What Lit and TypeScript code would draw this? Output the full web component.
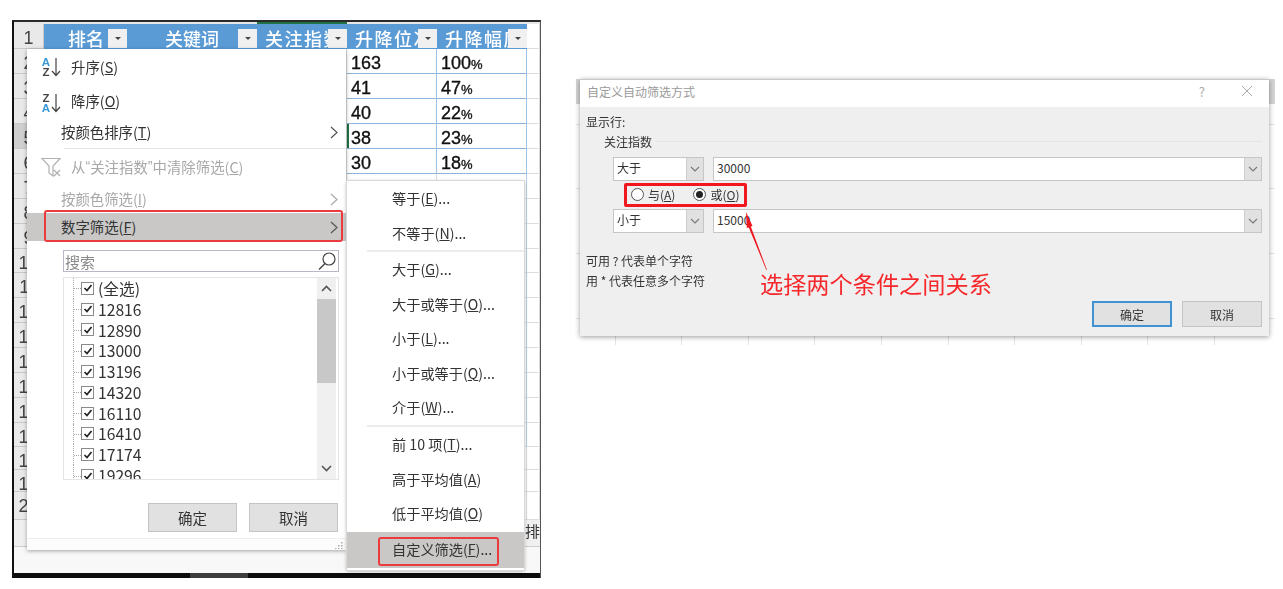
import { LitElement, html, css, svg } from "lit";
import { customElement } from "lit/decorators.js";

const rowNums = Array.from({ length: 20 }, (_, i) => i + 1);
const colIdx = [1, 2, 3, 4, 5, 6];
const heads = ["排名", "关键词", "关注指数", "升降位次", "升降幅度"];
const data: Record<number, [string, string]> = {
  2: ["163", "100"],
  3: ["41", "47"],
  4: ["40", "22"],
  5: ["38", "23"],
  6: ["30", "18"],
};
const values = ["12816", "12890", "13000", "13196", "14320", "16110", "16410", "17174", "19296"];

const chev = svg`<polyline points="1,1 7,6.5 1,12" fill="none" stroke="currentColor" stroke-width="1.2"/>`;
const check = svg`<polyline points="2.5,6 5,8.5 9.5,3" fill="none" stroke="#222" stroke-width="1.7"/>`;
const ddIcon = svg`<polyline points="1,1 5,5 9,1" fill="none" stroke="#777" stroke-width="1.1"/>`;

function label(text: string, key: string, tail = "") {
  return html`${text}(<u>${key}</u>)${tail}`;
}

@customElement("app-root")
export class AppRoot extends LitElement {
  static styles = css`
    :host { display: block; position: relative; width: 1283px; height: 589px; overflow: hidden; background: #fff;
      font-family: "Noto Sans CJK SC", "Noto Sans", sans-serif; color: #333; }
    u { text-underline-offset: 1px; text-decoration-thickness: 1px; }
    svg { display: block; }

    .sheet { position: absolute; left: 12px; top: 20px; width: 529px; height: 558px; box-sizing: border-box; overflow: hidden;
      border-top: 2px solid #2a2a2a; border-left: 2px solid #111; border-right: 1px solid #555; display: flex; flex-direction: column; background: #fff; filter: blur(0.35px); }
    .colhead { height: 2px; flex: none; display: grid; grid-template-columns: 30px 83px 130px 90px 90px 90px 1fr; background: #e6e6e6; }
    .colhead .sel { background: #217346; }
    .grid { display: grid; flex: none; grid-template-columns: 30px 83px 130px 90px 90px 90px 1fr;
      grid-template-rows: repeat(9, 25px) 24px repeat(6, 25px) 24px 23px 22px 28px; }
    .c { box-sizing: border-box; border-right: 1px solid #dcdcdc; border-bottom: 1px solid #dcdcdc; overflow: hidden; white-space: nowrap; }
    .rn { background: #e9e9e9; border-color: #c9c9c9; font: 18px/29px "Liberation Sans", sans-serif; color: #444; text-align: center; }
    .rn.on { background: #cfcfcf; }
    .h { background: #5b9bd5; border: none; color: #fff; font-size: 18px; font-weight: 500; line-height: 25px; display: flex; align-items: center; position: relative; padding-top: 3px; }
    .h.a { padding-left: 24px; }
    .h.b { padding-left: 38px; }
    .h.d { padding-left: 8px; letter-spacing: 1.5px; }
    .fb { position: absolute; right: 0; top: 5px; width: 19px; height: 19px; background: #f0f0f0; display: flex; align-items: center; justify-content: center; }
    .fb i { width: 0; height: 0; border: 3.5px solid transparent; border-top: 3.5px solid #444; border-bottom: 0; }
    .d1 { border-right: 1px solid #9dc3e6; border-bottom: 1px solid #8fb4dc; color: #111; font: 18px/28px "Liberation Sans", sans-serif; padding-left: 4px; -webkit-text-stroke: 0.35px #111; }
    .d1 small { font-size: 13px; }
    .lb { border-right-color: #b4cfe9; }
    .sg { box-shadow: inset 2px 0 0 #217346; }
    .tabs { height: 26px; flex: none; background: #f0f0f0; border-bottom: 1px solid #cfcfcf; display: flex; justify-content: flex-end; font-size: 15px; line-height: 21px; }
    .tabs span { width: 15px; white-space: nowrap; }
    .sp { flex: 1; background: #f8f8f8; }
    .bottom { height: 5px; flex: none; background: #0c0c0c; display: flex; padding-left: 176px; }
    .bottom i { width: 58px; background: #3d3d3d; }

    .menu { position: absolute; background: #fff; box-shadow: 0 1px 4px rgba(0,0,0,.35); font-size: 14.4px; color: #333; display: grid; filter: blur(0.35px); }
    .m1 { left: 27px; top: 49px; width: 319px; height: 501px;
      grid-template-rows: 36px 32px 31px 1px 36px 28px 28px 9px 22px 5px 203px 23px 29px 6px 12px; }
    .m2 { left: 347px; top: 181px; width: 177px; height: 389px; outline: 1px solid #d8d8d8; font-size: 14.2px;
      grid-template-rows: 36px 33px 2px 36px 34px 34px 35px 34px 2px 36px 33px 36px 36px 2px; }
    .it { display: flex; align-items: center; white-space: nowrap; padding-left: 34px; padding-bottom: 2px; box-sizing: border-box; position: relative; }
    .it.t { padding-left: 44px; }
    .m2 .it.t { padding-left: 45px; }
    .it.off { color: #a8a8a8; }
    .it.hv { background: #c9c8c7; }
    .it .ar { position: absolute; right: 8px; top: 50%; margin-top: -6.5px; color: #555; }
    .it.off .ar { color: #aaa; }
    .ic { position: absolute; left: 14px; top: 50%; margin-top: -10px; }
    .q { font-family: "Liberation Sans", sans-serif; }
    .sort { position: absolute; left: 14px; top: 7px; width: 22px; height: 22px; display: flex; align-items: center; }
    .sort .ls { display: flex; flex-direction: column; font: bold 11.5px/10px "Liberation Sans", sans-serif; width: 10px; text-align: center; }
    .bl { color: #3a97d6; } .dk { color: #444; }
    .sepL { margin-left: 37px; background: #e4e4e4; }
    .sepR { margin-left: 20px; background: #ececec; }
    .search { margin: 0 7px 0 36px; border: 1px solid #b8b8c8; box-sizing: border-box; display: flex; align-items: center; justify-content: space-between; color: #8a8a8a; font-size: 15px; padding: 0 1px; }
    .list { margin: 0 7px 0 36px; border: 1px solid #e4e4e4; box-sizing: border-box; display: flex; overflow: hidden; }
    .tree { flex: 1; padding: 0 0 0 9px; overflow: hidden; }
    .tree > div { height: 20.8px; display: flex; align-items: center; font-size: 15.7px; color: #333; position: relative; padding-left: 7px; border-left: 1px dotted #aaa; }
    .cb { width: 11px; height: 11px; border: 1px solid #8a8a8a; background: #fff; margin-right: 4px; flex: none; position: relative; }
    .cb svg { position: absolute; left: -0.5px; top: -0.5px; }
    .tick { position: absolute; left: 0; top: 50%; width: 7px; border-top: 1px dotted #aaa; }
    .scroll { width: 19px; margin-right: 2px; background: #f0f0f0; display: grid; grid-template-rows: 21px 84px 1fr 21px; justify-items: center; align-items: center; }
    .thumb { background: #c8c8c8; width: 100%; height: 100%; }
    .btns { display: flex; justify-content: flex-end; gap: 12px; margin-right: 8px; }
    .btn { background: #e1e1e1; border: 1px solid #c4c4c4; box-sizing: border-box; display: flex; align-items: center; justify-content: center; font-size: 14.5px; color: #333; }
    .btns .btn { width: 89px; }
    .foot { background: #fcfcfc; border-top: 1px solid #eeeeee; display: flex; justify-content: flex-end; align-items: center; padding-right: 3px; }
    .red { position: absolute; box-sizing: border-box; border: 2px solid #ec3b3f; border-radius: 3px; pointer-events: none; }
    .r1 { left: 44px; top: 210px; width: 299px; height: 32px; }
    .r2 { left: 378px; top: 537px; width: 121px; height: 29px; }

    .back { position: absolute; left: 576px; top: 79px; width: 699px; height: 266px; filter: blur(0.35px);
      background:
        linear-gradient(#d4d4d4, #d4d4d4) 0 0 / 100% 25px no-repeat,
        repeating-linear-gradient(to bottom, transparent 0 44.8px, #e6e6e6 44.8px 45.8px, transparent 45.8px 64.6px) ,
        repeating-linear-gradient(to right, transparent 0 38.6px, #e4e4e4 38.6px 39.6px, transparent 39.6px 66.6px); }
    .dlg { position: absolute; left: 580px; top: 79px; width: 689px; height: 257px; background: #efefef; border-top: 1px solid #c8c8c8; box-sizing: border-box; box-shadow: 0 1px 5px rgba(0,0,0,.4); font-size: 12px; color: #333; display: flex; flex-direction: column; filter: blur(0.35px); }
    .ttl { height: 27px; flex: none; background: #fff; display: flex; align-items: center; padding: 0 16px 5px 7px; box-sizing: border-box; color: #9a9a9a; font-size: 12px; }
    .ttl .g { flex: 1; }
    .ttl .qm { margin-right: 36px; font-size: 13px; color: #aaa; }
    .bd { flex: 1; padding: 7px 7px 0 6px; display: flex; flex-direction: column; }
    .t16 { height: 16px; line-height: 16px; }
    .lg { height: 27px; padding-bottom: 5px; box-sizing: border-box; margin-left: 18px; display: flex; align-items: center; gap: 4px; flex: none; }
    .lg i { flex: 1; border-top: 1px solid #e4e4e4; }
    .crow { display: flex; gap: 9px; margin-left: 27px; height: 24px; flex: none; }
    .combo { background: #fff; border: 1px solid #c6c6c6; box-sizing: border-box; display: flex; align-items: center; justify-content: space-between; padding-left: 3px; }
    .combo > span:first-child { margin-bottom: 3px; }
    .combo.s { width: 91px; }
    .combo.l { flex: 1; }
    .dd { width: 17px; height: 100%; background: #e1e1e1; border-left: 1px solid #cfcfcf; display: flex; align-items: center; justify-content: center; box-sizing: border-box; }
    .rrow { height: 28px; flex: none; margin-left: 45px; display: flex; align-items: center; gap: 18px; padding-bottom: 1px; box-sizing: border-box; }
    .rd { display: flex; align-items: center; gap: 4px; }
    .radio { width: 13px; height: 13px; border-radius: 50%; border: 1px solid #555; background: #fff; box-sizing: border-box; display: flex; align-items: center; justify-content: center; }
    .radio i { width: 7px; height: 7px; border-radius: 50%; background: #222; }
    .help { margin-top: 20px; display: flex; flex-direction: column; gap: 4px; }
    .dbtns { margin-top: auto; margin-bottom: 9px; display: flex; justify-content: flex-end; gap: 10px; }
    .dbtns .btn { width: 80px; height: 26px; font-size: 12px; }
    .dbtns .pri { border: 2px solid #3f93d3; }
    .rbox { position: absolute; left: 624px; top: 183px; width: 123px; height: 24px; box-sizing: border-box; border: 3px solid #f0171f; border-radius: 2px; }
    .note { position: absolute; left: 760px; top: 266px; color: #f6282c; font-size: 23.2px; line-height: 34px; white-space: nowrap; filter: blur(0.3px); }
    .arrow { position: absolute; left: 740px; top: 205px; }
  `;

  private cell(r: number, c: number) {
    if (c === 0) return html`<div class="c rn ${r === 5 ? "on" : ""}">${r}</div>`;
    if (r === 1 && c <= 5) {
      const cls = c === 1 ? "a" : c === 2 ? "b" : "d";
      return html`<div class="c h ${cls}">${heads[c - 1]}<span class="fb"><i></i></span></div>`;
    }
    if (data[r] && (c === 4 || c === 5)) {
      const [a, b] = data[r];
      const sg = r === 5 && c === 4 ? "sg" : "";
      return c === 4
        ? html`<div class="c d1 ${sg}">${a}</div>`
        : html`<div class="c d1">${b}<small>%</small></div>`;
    }
    if (c === 5 && r <= 17) return html`<div class="c lb"></div>`;
    return html`<div class="c"></div>`;
  }

  private sheet() {
    return html`<div class="sheet">
      <div class="colhead"><i></i><i></i><i></i><i class="sel"></i><i></i><i></i><i></i></div>
      <div class="grid">
        ${rowNums.map((r) => html`${this.cell(r, 0)}${colIdx.map((c) => this.cell(r, c))}`)}
      </div>
      <div class="tabs"><span>排</span></div>
      <div class="sp"></div>
      <div class="bottom"><i></i></div>
    </div>`;
  }

  private filterMenu() {
    return html`<div class="menu m1">
      <div class="it t"><span class="sort"><span class="ls"><span class="bl">A</span><span class="dk">Z</span></span>
        <svg width="10" height="20" viewBox="0 0 10 20"><path d="M5 1V18M1 14l4 4.5 4-4.5" fill="none" stroke="#444" stroke-width="1.2"/></svg></span>${label("升序", "S")}</div>
      <div class="it t"><span class="sort"><span class="ls"><span class="dk">Z</span><span class="bl">A</span></span>
        <svg width="10" height="20" viewBox="0 0 10 20"><path d="M5 1V18M1 14l4 4.5 4-4.5" fill="none" stroke="#444" stroke-width="1.2"/></svg></span>${label("降序", "O")}</div>
      <div class="it">${label("按颜色排序", "T")}<svg class="ar" width="8" height="13">${chev}</svg></div>
      <div class="sepL"></div>
      <div class="it t off"><svg class="ic" width="22" height="21" viewBox="0 0 22 21"><path d="M1 1.5H19L12 9V19L8 16V9Z M13 13l6 6M19 13l-6 6" fill="none" stroke="#b0b0b0" stroke-width="1.2"/></svg>从<span class="q">“</span>关注指数<span class="q">”</span>中清除筛选(<u>C</u>)</div>
      <div class="it off">${label("按颜色筛选", "I")}<svg class="ar" width="8" height="13">${chev}</svg></div>
      <div class="it hv">${label("数字筛选", "F")}<svg class="ar" width="8" height="13">${chev}</svg></div>
      <div></div>
      <div class="search"><span>搜索</span><svg width="20" height="20" viewBox="0 0 20 20"><circle cx="12" cy="8" r="6" fill="none" stroke="#444" stroke-width="1.2"/><path d="M8 12.5L2 18.5" stroke="#444" stroke-width="1.4"/></svg></div>
      <div></div>
      <div class="list">
        <div class="tree">
          ${["(全选)", ...values].map((v) => html`<div><i class="tick"></i><span class="cb"><svg width="12" height="12">${check}</svg></span>${v}</div>`)}
        </div>
        <div class="scroll">
          <svg width="11" height="7"><polyline points="1,6 5.5,1.5 10,6" fill="none" stroke="#555" stroke-width="1.6"/></svg>
          <div class="thumb"></div><div></div>
          <svg width="11" height="7"><polyline points="1,1 5.5,5.5 10,1" fill="none" stroke="#555" stroke-width="1.6"/></svg>
        </div>
      </div>
      <div></div>
      <div class="btns"><div class="btn">确定</div><div class="btn">取消</div></div>
      <div></div>
      <div class="foot"><svg width="8" height="8"><path d="M6 1h1.5v1.5H6zM3 4h1.5v1.5H3zM6 4h1.5v1.5H6zM0 7h1.5v1H0zM3 7h1.5v1H3zM6 7h1.5v1H6z" fill="#aaa"/></svg></div>
    </div>`;
  }

  private subMenu() {
    return html`<div class="menu m2">
      <div class="it t">${label("等于", "E", "...")}</div>
      <div class="it t">${label("不等于", "N", "...")}</div>
      <div class="sepR"></div>
      <div class="it t">${label("大于", "G", "...")}</div>
      <div class="it t">${label("大于或等于", "O", "...")}</div>
      <div class="it t">${label("小于", "L", "...")}</div>
      <div class="it t">${label("小于或等于", "Q", "...")}</div>
      <div class="it t">${label("介于", "W", "...")}</div>
      <div class="sepR"></div>
      <div class="it t">${label("前 10 项", "T", "...")}</div>
      <div class="it t">${label("高于平均值", "A")}</div>
      <div class="it t">${label("低于平均值", "O")}</div>
      <div class="it t hv">${label("自定义筛选", "F", "...")}</div>
    </div>`;
  }

  private combo(kind: string, val: string) {
    return html`<div class="combo ${kind}"><span>${val}</span><span class="dd"><svg width="10" height="6">${ddIcon}</svg></span></div>`;
  }

  private dialog() {
    return html`<div class="back"></div>
    <div class="dlg">
      <div class="ttl"><span>自定义自动筛选方式</span><span class="g"></span><span class="qm">?</span>
        <svg width="12" height="12" viewBox="0 0 12 12"><path d="M1 1L11 11M11 1L1 11" stroke="#a8a8a8" stroke-width="1"/></svg></div>
      <div class="bd">
        <div class="t16">显示行:</div>
        <div class="lg"><span>关注指数</span><i></i></div>
        <div class="crow">${this.combo("s", "大于")}${this.combo("l", "30000")}</div>
        <div class="rrow">
          <span class="rd"><span class="radio"></span><span>与(<u>A</u>)</span></span>
          <span class="rd"><span class="radio"><i></i></span><span>或(<u>O</u>)</span></span>
        </div>
        <div class="crow">${this.combo("s", "小于")}${this.combo("l", "15000")}</div>
        <div class="help"><div class="t16">可用 ? 代表单个字符</div><div class="t16">用 * 代表任意多个字符</div></div>
        <div class="dbtns"><div class="btn pri">确定</div><div class="btn">取消</div></div>
      </div>
    </div>
    <div class="rbox"></div>
    <svg class="arrow" width="32" height="70" viewBox="0 0 32 70"><polygon points="6,7 12.5,21 10.8,21.5 27,65 26.3,65 8.8,22.5 6.8,23" fill="#f0171f"/></svg>
    <div class="note">选择两个条件之间关系</div>`;
  }

  render() {
    return html`${this.sheet()}${this.filterMenu()}${this.subMenu()}
      <div class="red r1"></div><div class="red r2"></div>
      ${this.dialog()}`;
  }
}
